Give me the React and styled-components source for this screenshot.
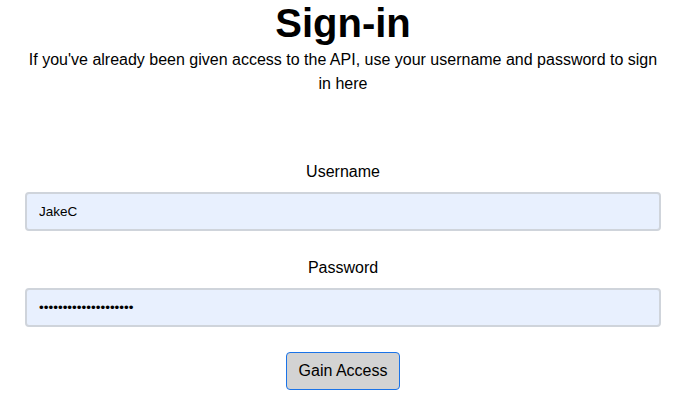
import styled, { createGlobalStyle } from 'styled-components';

const GlobalStyle = createGlobalStyle`
  body {
    margin: 0;
    background: #ffffff;
    font-family: 'Liberation Sans', Arial, sans-serif;
    color: #000000;
  }
`;

const SignIn = () => {
  return (
    <>
      <GlobalStyle />
      <Page>
        <Title>Sign-in</Title>
        <Intro>
          If you've already been given access to the API, use your username and
          password to sign in here
        </Intro>
        <Form onSubmit={(event) => event.preventDefault()}>
          <Field>
            <Label htmlFor="username">Username</Label>
            <Input id="username" type="text" defaultValue="JakeC" />
          </Field>
          <Field>
            <Label htmlFor="password">Password</Label>
            <Input id="password" type="password" defaultValue="aaaaaaaaaaaaaaaaaaaa" />
          </Field>
          <SubmitButton type="submit">Gain Access</SubmitButton>
        </Form>
      </Page>
    </>
  );
};

export default SignIn;

const Page = styled.main`
  display: flex;
  flex-direction: column;
  align-items: stretch;
  padding: 0 22px 0 25px;
  text-align: center;
`;

const Title = styled.h1`
  margin: 0;
  font-size: 40px;
  font-weight: bold;
  line-height: 46px;
`;

const Intro = styled.p`
  margin: 2px 0 0 0;
  font-size: 16px;
  line-height: 24px;
`;

const Form = styled.form`
  display: flex;
  flex-direction: column;
  align-items: center;
  margin-top: 66px;
`;

const Field = styled.div`
  display: flex;
  flex-direction: column;
  align-items: stretch;
  width: 100%;
  gap: 11px;
  margin-bottom: 27px;

  &:last-of-type {
    margin-bottom: 25px;
  }
`;

const Label = styled.label`
  padding-top: 1px;
  font-size: 16px;
  line-height: 18px;
`;

const Input = styled.input`
  box-sizing: border-box;
  width: 100%;
  height: 39px;
  padding: 0 12px;
  font-family: 'Liberation Sans', Arial, sans-serif;
  font-size: 13.5px;
  color: #000000;
  background-color: #e8f0fe;
  border: 2px solid #cfd4db;
  border-radius: 4px;
  outline: none;
`;

const SubmitButton = styled.button`
  box-sizing: border-box;
  height: 38px;
  padding: 0 12px;
  font-family: 'Liberation Sans', Arial, sans-serif;
  font-size: 16px;
  color: #000000;
  background-color: #d3d3d3;
  border: 1px solid #1a73e8;
  border-radius: 4px;
  cursor: pointer;
`;
